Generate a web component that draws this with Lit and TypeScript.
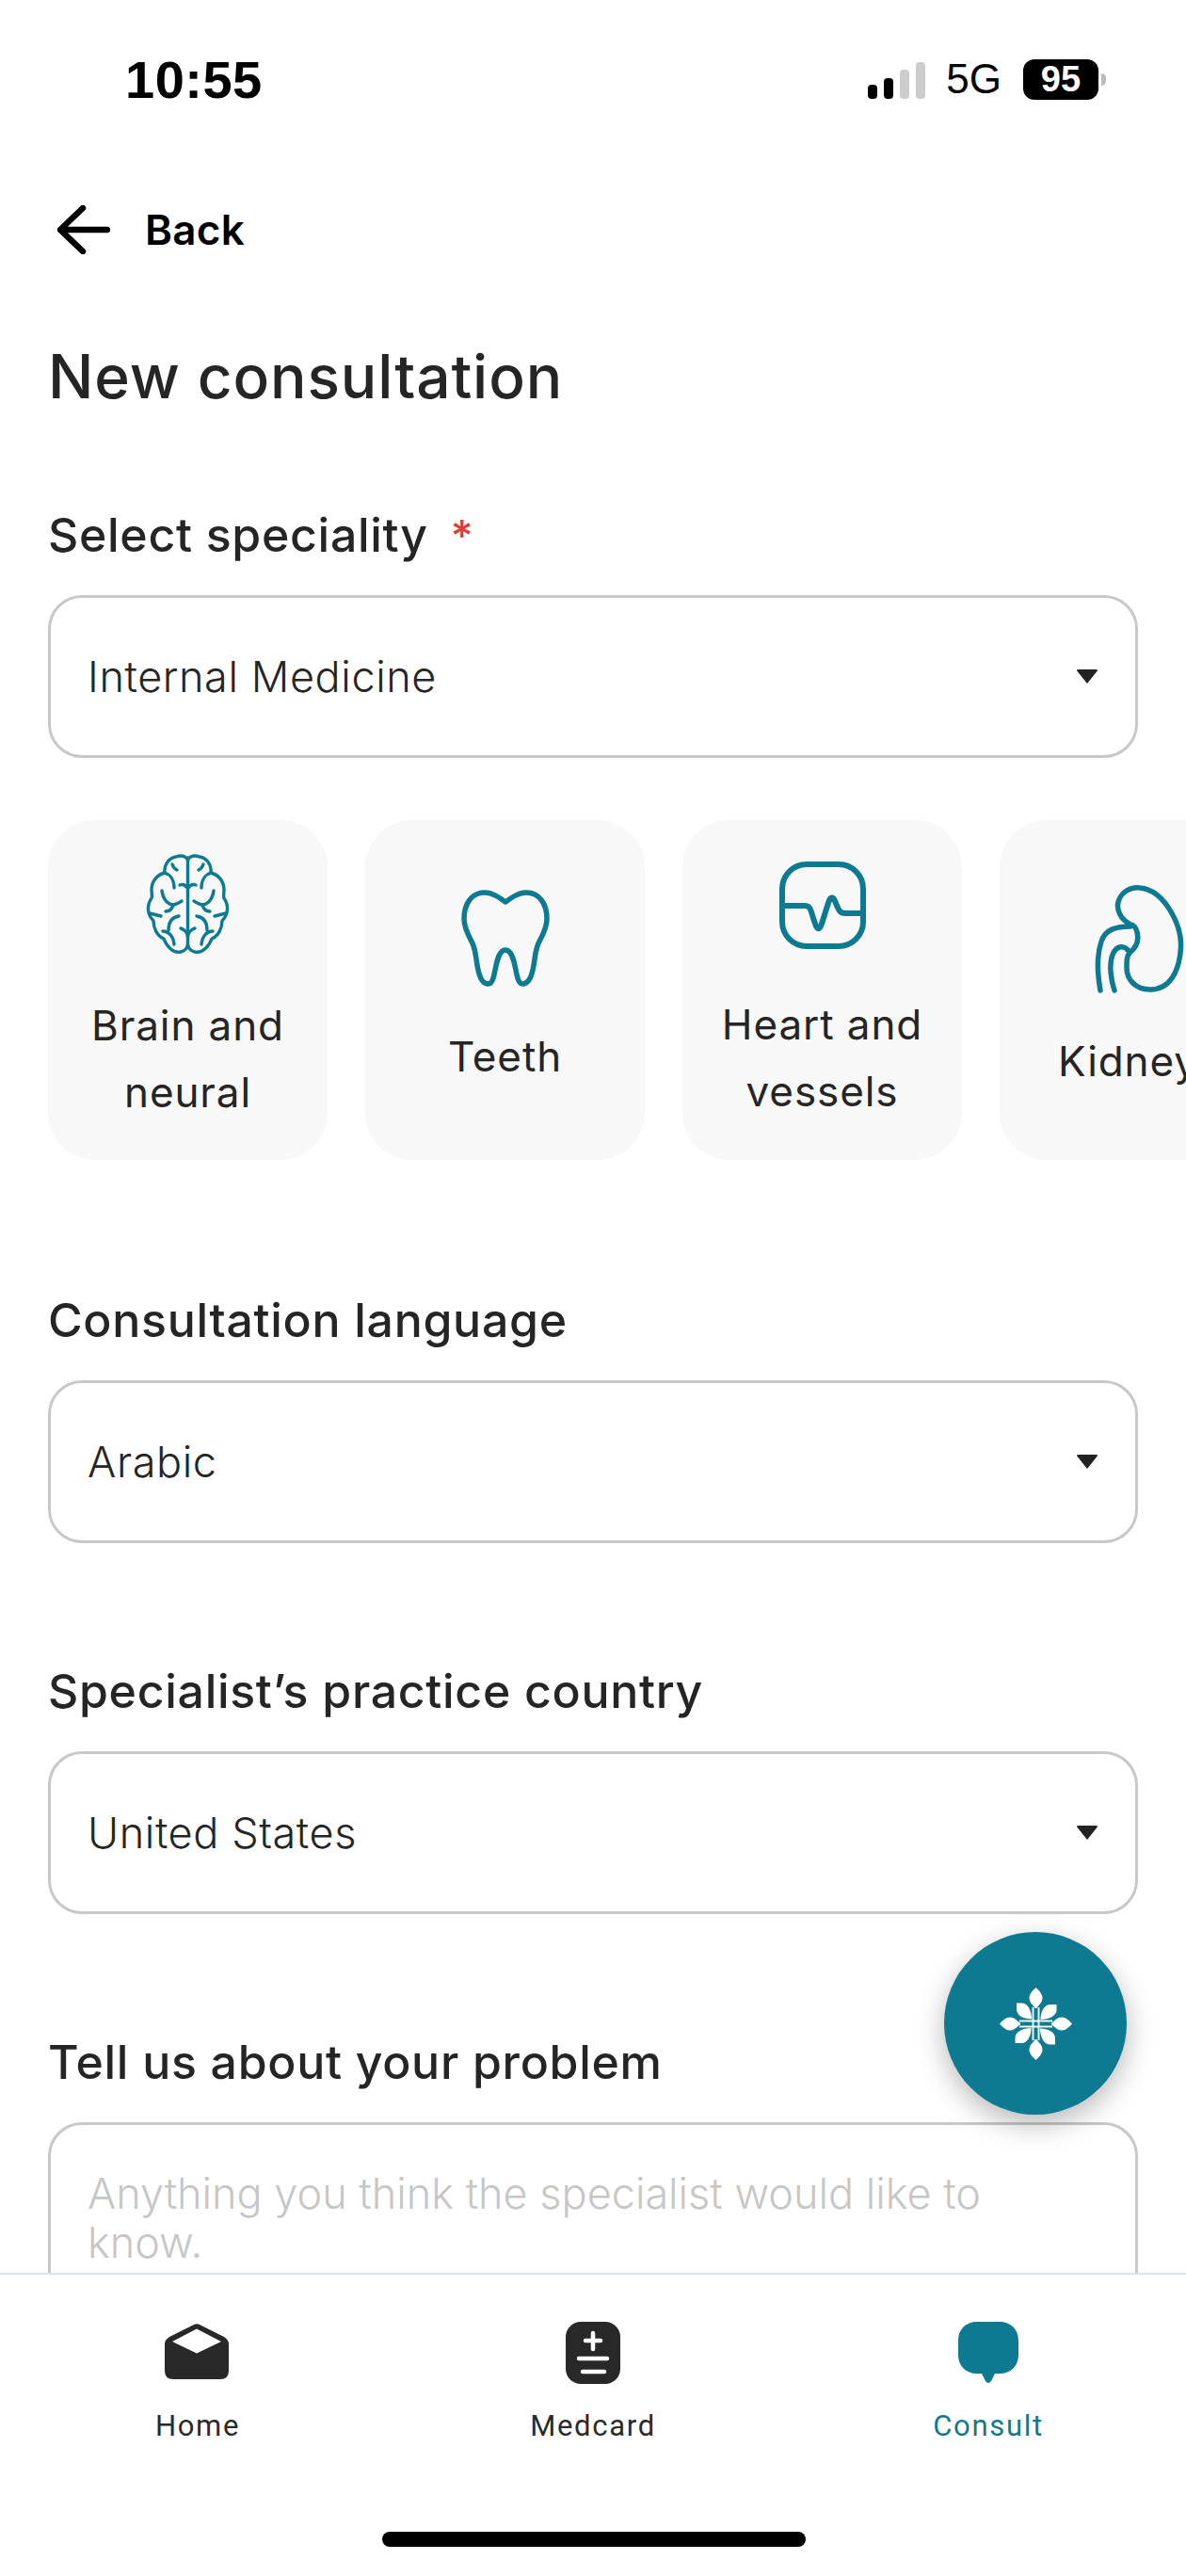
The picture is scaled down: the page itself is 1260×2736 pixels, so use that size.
import { LitElement, css, html, svg } from "lit";
import { customElement } from "lit/decorators.js";

const TEAL = "#0e7a92";

const brainHalf = svg`
  <path d="M69.5 22C66 17 61 17.5 57 19C50 20 44 27 45 36C37 38 31 45 31 54C31 58 32 60 31 63C26 70 26 80 33 87C33 95 37 103 44 106C47 114 54 122 62 120C67 119 69.5 115 69.5 112"/>
  <path d="M53 27C54 30 56 32 58 33"/>
  <path d="M45 36C51 38 55 44 55 52"/>
  <path d="M42 55C43 64 48 69 53 70C57 70 60 68 63 66"/>
  <path d="M46 77C50 77 53 74 54 70"/>
  <path d="M61 49C64 48 67 49 69 52"/>
  <path d="M29 79C33 80 37 81 41 82"/>
  <path d="M60 82C54 83 49 87 49 97"/>
  <path d="M43 98C48 98 54 102 55 112"/>
  <path d="M62 95C66 96 69 100 69.5 104"/>
`;

const icons = {
  brain: html`<svg class="icon" width="86" height="108" viewBox="27 17 86 108" stroke-width="3.4">
    <path d="M69.5 20V114"/>
    <g>${brainHalf}</g>
    <g transform="translate(139 0) scale(-1 1)">${brainHalf}</g>
  </svg>`,
  tooth: html`<svg class="icon" width="94" height="104" viewBox="0 0 94 104" stroke-width="5.5">
    <path d="M47 13C40 8 33 3 25 3C11 3 3 15 3 31C3 41 8 49 12 57C17 68 15 79 20 92C23 100 31 104 34 94C37 84 38 64 47 64C56 64 57 84 60 94C63 104 71 100 74 92C79 79 77 68 82 57C86 49 91 41 91 31C91 15 83 3 69 3C61 3 54 8 47 13Z"/>
  </svg>`,
  heart: html`<svg class="icon" width="92" height="107" viewBox="0 -7 92 107" stroke-width="6">
    <rect x="3" y="3" width="86" height="87" rx="26"/>
    <path d="M3 47H27C32 47 33 50 35 57L38 66C40 73 43 73 45 66L52 44C54 37 57 37 59 42L62 49C64 54 66 55 71 55H89"/>
  </svg>`,
  kidney: html`<svg class="icon" width="93" height="114" viewBox="0 0 93 114" stroke-width="5.5">
    <path d="M37 42C26 36 22 26 24 18C27 7 37 2 47 3C60 4 72 14 81 30C89 44 92 58 90 72C88 90 80 111 58 111C42 111 33 100 33 88C33 80 33 76 36 72C44 66 46 58 44 50C43 45 40 42 37 42Z"/>
    <path d="M5 112C2 95 1 75 6 60C10 47 22 44 37 44"/>
    <path d="M20 112C16 100 14 84 18 74C22 64 30 63 36 71"/>
  </svg>`,
};

const specialities = [
  { icon: icons.brain, label: ["Brain and", "neural"] },
  { icon: icons.tooth, label: ["Teeth"] },
  { icon: icons.heart, label: ["Heart and", "vessels"] },
  { icon: icons.kidney, label: ["Kidneys"] },
];

@customElement("app-root")
export class AppRoot extends LitElement {
  static styles = css`
    :host {
      position: relative;
      display: flex;
      flex-direction: column;
      width: 1260px;
      height: 2736px;
      overflow: hidden;
      background: #fff;
      color: #252525;
      font-family: Inter, "Noto Sans", sans-serif;
    }

    .status {
      flex: none;
      display: flex;
      align-items: center;
      height: 60px;
      padding: 54px 85px 0 133px;
      color: #000;
      font-family: "Liberation Sans", Arial, sans-serif;
    }

    .time {
      font-size: 56px;
      font-weight: 700;
      letter-spacing: 0.5px;
    }

    .signal {
      display: flex;
      align-items: flex-end;
      gap: 7px;
      margin-left: auto;
      height: 39px;
      margin-top: 2px;
    }

    .signal i {
      width: 10px;
      border-radius: 4px;
      background: #000;
    }

    .signal i.off {
      background: #ccc;
    }

    .net {
      margin-left: 22px;
      font-size: 44px;
      line-height: 42px;
    }

    .battery {
      display: flex;
      align-items: center;
      margin-left: 23px;
    }

    .battery span {
      display: block;
      width: 80px;
      height: 43px;
      border-radius: 12px;
      background: #000;
      color: #fff;
      font-size: 38px;
      font-weight: 700;
      line-height: 43px;
      text-align: center;
    }

    .battery i {
      width: 5px;
      height: 13px;
      margin-left: 3px;
      border-radius: 0 6px 6px 0;
      background: #bbb;
    }

    main {
      flex: 1;
      min-height: 0;
      padding: 100px 51px 0;
      overflow: hidden;
    }

    .back {
      display: flex;
      align-items: center;
      gap: 37px;
      height: 60px;
      margin-left: 10px;
      color: #000;
      font-size: 44px;
      font-weight: 600;
      letter-spacing: 0.3px;
    }

    h1 {
      margin: 86px 0 0;
      font-size: 64px;
      font-weight: 500;
      line-height: 80px;
      letter-spacing: 0.9px;
    }

    .field {
      margin-top: 127px;
    }

    .field.first {
      margin-top: 98px;
    }

    .field.after-cards {
      margin-top: 140px;
    }

    .label {
      height: 60px;
      font-size: 50px;
      font-weight: 450;
      line-height: 60px;
      letter-spacing: 0.7px;
    }

    .star {
      margin-left: 24px;
      color: #e53935;
      font-size: 46px;
    }

    .box {
      box-sizing: border-box;
      margin-top: 34px;
      border: 3px solid #c8c8c8;
      border-radius: 36px;
      padding: 0 39px;
      background: #fff;
      font-size: 45px;
      font-weight: 300;
    }

    .select {
      display: flex;
      align-items: center;
      justify-content: space-between;
      height: 173px;
      letter-spacing: 0.6px;
    }

    .caret {
      width: 0;
      height: 0;
      border-left: 12px solid transparent;
      border-right: 12px solid transparent;
      border-top: 15px solid #222;
      border-radius: 3px;
    }

    .cards {
      display: flex;
      gap: 40px;
      margin: 66px -51px 0;
      padding-left: 51px;
      overflow: hidden;
    }

    .card {
      flex: 0 0 297px;
      display: flex;
      flex-direction: column;
      align-items: center;
      justify-content: center;
      gap: 38px;
      height: 361px;
      border-radius: 50px;
      background: #f8f8f8;
      font-size: 44px;
      line-height: 71px;
      letter-spacing: 0.9px;
      text-align: center;
      white-space: nowrap;
    }

    .icon {
      display: block;
      flex: none;
      overflow: visible;
      fill: none;
      stroke: #0e7a92;
      stroke-linecap: round;
      stroke-linejoin: round;
    }

    .area {
      height: 300px;
      padding-top: 47px;
      color: #c6c6c6;
      line-height: 52px;
    }

    nav {
      flex: none;
      position: relative;
      display: grid;
      grid-template-columns: repeat(3, 1fr);
      box-sizing: border-box;
      height: 322px;
      padding: 50px 0 0;
      border-top: 2px solid #dde3e8;
      background: #fff;
      font-family: Roboto, "Liberation Sans", sans-serif;
      font-size: 31px;
      letter-spacing: 1.7px;
    }

    .tab {
      display: flex;
      flex-direction: column;
      align-items: center;
      color: #2a2a2a;
    }

    .tab.active {
      color: #0e7a92;
    }

    .tab svg {
      display: block;
      height: 66px;
      overflow: visible;
      margin-bottom: 26px;
    }

    .bar {
      position: absolute;
      left: 406px;
      bottom: 31px;
      width: 450px;
      height: 16px;
      border-radius: 8px;
      background: #000;
    }

    .fab {
      position: absolute;
      left: 1003px;
      top: 2052px;
      display: flex;
      align-items: center;
      justify-content: center;
      width: 194px;
      height: 194px;
      border-radius: 50%;
      background: #0e7a92;
      box-shadow: 0 10px 30px rgba(0, 0, 0, 0.28);
    }
  `;

  render() {
    return html`
      <div class="status">
        <span class="time">10:55</span>
        <div class="signal">
          <i style="height:15px"></i>
          <i style="height:22px"></i>
          <i class="off" style="height:31px"></i>
          <i class="off" style="height:39px"></i>
        </div>
        <span class="net">5G</span>
        <div class="battery"><span>95</span><i></i></div>
      </div>

      <main>
        <div class="back">
          <svg width="56" height="52" viewBox="0 0 56 52" fill="none" stroke="#000" stroke-width="6.5" stroke-linecap="round" stroke-linejoin="round">
            <path d="M53 26H4M27 3L3 26L27 49"/>
          </svg>
          Back
        </div>
        <h1>New consultation</h1>

        <div class="field first">
          <div class="label">Select speciality<span class="star">*</span></div>
          <div class="box select">Internal Medicine<span class="caret"></span></div>
        </div>

        <div class="cards">
          ${specialities.map(
            (s) => html`
              <div class="card">
                ${s.icon}
                <div>${s.label.map((l) => html`<div>${l}</div>`)}</div>
              </div>
            `
          )}
        </div>

        <div class="field after-cards">
          <div class="label">Consultation language</div>
          <div class="box select">Arabic<span class="caret"></span></div>
        </div>

        <div class="field">
          <div class="label">Specialist’s practice country</div>
          <div class="box select">United States<span class="caret"></span></div>
        </div>

        <div class="field">
          <div class="label">Tell us about your problem</div>
          <div class="box area">Anything you think the specialist would like to know.</div>
        </div>
      </main>

      <nav>
        <div class="tab">
          <svg width="68" viewBox="1 0 68 66"><path fill="#282828" fill-rule="evenodd" d="M31 3L5 16Q0 19 0 24V52Q0 61 9 61H59Q68 61 68 52V24Q68 19 63 16L37 3Q34 1.5 31 3ZM34 7.500L60 21L34 33.500L8 21Z"/></svg>
          Home
        </div>
        <div class="tab">
          <svg width="58" viewBox="0 0 58 66">
            <rect width="58" height="66" rx="16" fill="#282828"/>
            <path d="M21 20H37M29 12V29M14 39H44M18 53H41" stroke="#fff" stroke-width="4.500" stroke-linecap="round"/>
          </svg>
          Medcard
        </div>
        <div class="tab active">
          <svg width="64" viewBox="0 0 64 66"><path fill="${TEAL}" d="M20 0H44C56 0 64 8 64 20V35C64 47 56 55 44 55H39L35 63Q32 67 29 63L25 55H20C8 55 0 47 0 35V20C0 8 8 0 20 0Z"/></svg>
          Consult
        </div>
        <div class="bar"></div>
      </nav>

      <div class="fab">
        <svg width="77" height="77" viewBox="0 0 77 77" fill="#fff">
          ${[0, 90, 180, 270].map(
            (r) => svg`<g transform="rotate(${r} 38.5 38.5)">
              <path d="M38.5 0C42 3 45.5 7 45.5 11C45.5 16 41 19 39.3 22H37.7C36 19 31.5 16 31.5 11C31.5 7 35 3 38.5 0Z"/>
              <path d="M60.5 18V24C60.5 30 52 34 43.5 34C43.5 26 47 18 54 18Z"/>
              <path d="M35.5 21V56M41.5 21V56" stroke="#fff" stroke-width="1.5" fill="none"/>
            </g>`
          )}
        </svg>
      </div>
    `;
  }
}
